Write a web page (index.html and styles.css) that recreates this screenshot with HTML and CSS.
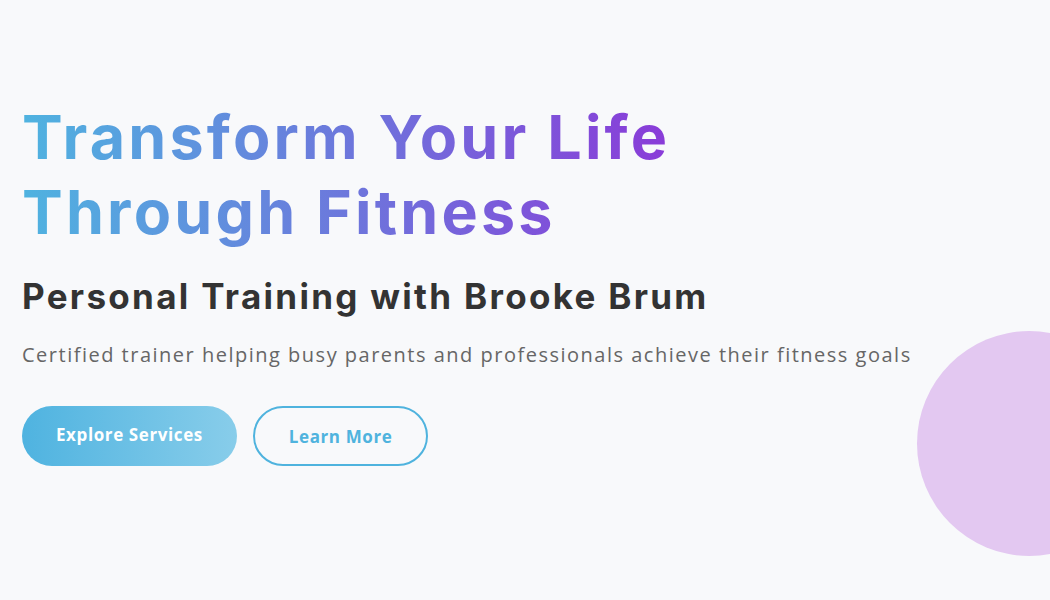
FILE: index.html
```html
<!DOCTYPE html>
<html lang="en">
<head>
<meta charset="utf-8">
<title>Brooke Brum Fitness</title>
<link rel="stylesheet" href="styles.css">
</head>
<body>
<section class="hero">
  <div class="hero-content">
    <h1 class="hero-title">Transform Your Life<br>Through Fitness</h1>
    <h2 class="hero-subtitle">Personal Training with Brooke Brum</h2>
    <p class="hero-text">Certified trainer helping busy parents and professionals achieve their fitness goals</p>
    <div class="hero-actions">
      <a class="btn btn-primary" href="#services">Explore Services</a>
      <a class="btn btn-outline" href="#about">Learn More</a>
    </div>
  </div>
  <div class="hero-circle"></div>
</section>
</body>
</html>
```
FILE: styles.css
```css
* { box-sizing: border-box; }
html, body { margin: 0; padding: 0; }
body {
  background: #f8f9fb;
  font-family: "Open Sans", "Noto Sans", sans-serif;
  width: 1050px;
  height: 600px;
  overflow: hidden;
}
.hero {
  position: relative;
  height: 600px;
  overflow: hidden;
  padding: 100px 0 0 22px;
}
.hero-content {
  display: flex;
  flex-direction: column;
  align-items: flex-start;
}
.hero-title {
  margin: 0;
  font-family: Inter, sans-serif;
  font-weight: 700;
  font-size: 61px;
  line-height: 75px;
  letter-spacing: 3.2px;
  background: linear-gradient(90deg, #4fb3e0 0%, #8a3bd8 100%);
  -webkit-background-clip: text;
  background-clip: text;
  color: transparent;
  display: inline-block;
}
.hero-subtitle {
  margin: 24px 0 0;
  font-family: Inter, sans-serif;
  font-weight: 700;
  font-size: 35px;
  line-height: 44px;
  letter-spacing: 2.3px;
  color: #333333;
}
.hero-text {
  margin: 22px 0 0;
  font-size: 20px;
  line-height: 30px;
  letter-spacing: 1.5px;
  color: #666666;
}
.hero-actions {
  display: flex;
  gap: 16px;
  margin-top: 36px;
}
.btn {
  display: inline-flex;
  align-items: center;
  justify-content: center;
  height: 60px;
  border-radius: 30px;
  font-family: "Open Sans", sans-serif;
  font-weight: 700;
  font-size: 17px;
  letter-spacing: 0.6px;
  text-decoration: none;
  padding: 0 34px;
}
.btn-primary {
  background: linear-gradient(90deg, #4fb3e0 0%, #88cdea 100%);
  color: #ffffff;
  padding-bottom: 4px;
}
.btn-outline {
  border: 2px solid #4fb3de;
  color: #4fb3de;
  background: transparent;
}
.hero-circle {
  position: absolute;
  left: 917px;
  top: 331px;
  width: 225px;
  height: 225px;
  border-radius: 50%;
  background: #e3c8f1;
}
```
